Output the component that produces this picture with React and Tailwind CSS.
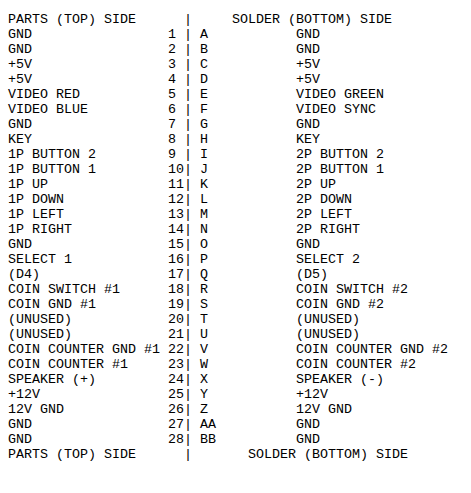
const pins = [
  [1, "A", "GND", "GND"],
  [2, "B", "GND", "GND"],
  [3, "C", "+5V", "+5V"],
  [4, "D", "+5V", "+5V"],
  [5, "E", "VIDEO RED", "VIDEO GREEN"],
  [6, "F", "VIDEO BLUE", "VIDEO SYNC"],
  [7, "G", "GND", "GND"],
  [8, "H", "KEY", "KEY"],
  [9, "I", "1P BUTTON 2", "2P BUTTON 2"],
  [10, "J", "1P BUTTON 1", "2P BUTTON 1"],
  [11, "K", "1P UP", "2P UP"],
  [12, "L", "1P DOWN", "2P DOWN"],
  [13, "M", "1P LEFT", "2P LEFT"],
  [14, "N", "1P RIGHT", "2P RIGHT"],
  [15, "O", "GND", "GND"],
  [16, "P", "SELECT 1", "SELECT 2"],
  [17, "Q", "(D4)", "(D5)"],
  [18, "R", "COIN SWITCH #1", "COIN SWITCH #2"],
  [19, "S", "COIN GND #1", "COIN GND #2"],
  [20, "T", "(UNUSED)", "(UNUSED)"],
  [21, "U", "(UNUSED)", "(UNUSED)"],
  [22, "V", "COIN COUNTER GND #1", "COIN COUNTER GND #2"],
  [23, "W", "COIN COUNTER #1", "COIN COUNTER #2"],
  [24, "X", "SPEAKER (+)", "SPEAKER (-)"],
  [25, "Y", "+12V", "+12V"],
  [26, "Z", "12V GND", "12V GND"],
  [27, "AA", "GND", "GND"],
  [28, "BB", "GND", "GND"],
];

const header = "PARTS (TOP) SIDE".padEnd(22) + "|     SOLDER (BOTTOM) SIDE";
const footer = "PARTS (TOP) SIDE".padEnd(22) + "|       SOLDER (BOTTOM) SIDE";

const rows = pins.map(
  ([n, letter, parts, solder]) =>
    parts.padEnd(20) + String(n).padEnd(2) + "| " + letter.padEnd(12) + solder
);

export default function App() {
  return (
    <div className="min-h-[493px] w-[471px] bg-white">
      <pre className="m-0 pl-2 pt-[12px] font-['Liberation_Mono','Courier_New',monospace] text-[13.333px] leading-[15px] text-black">
        {[header, ...rows, footer].join("\n")}
      </pre>
    </div>
  );
}
